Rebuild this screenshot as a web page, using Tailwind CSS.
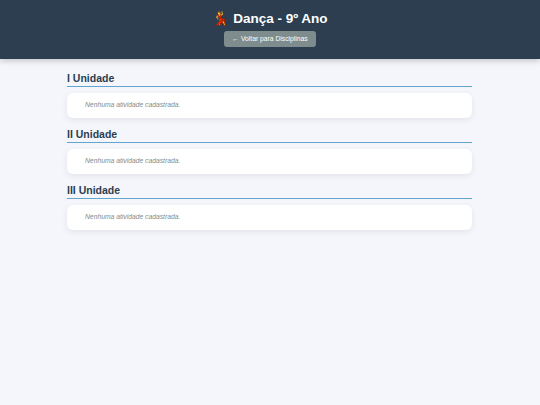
<!DOCTYPE html>
<html lang="pt-BR">
<head>
<meta charset="UTF-8" />
<title>Dança - 9º Ano</title>
<script src="https://cdn.jsdelivr.net/npm/@tailwindcss/browser@4"></script>
</head>
<body class="bg-[#f4f6fb] min-h-screen font-['Liberation_Sans',sans-serif]">
  <header class="h-[59px] bg-[#2c3e50] shadow-[0_2px_6px_rgba(0,0,0,0.2)] flex flex-col items-center pt-[9px]">
    <h1 class="text-[13.5px] leading-[19px] font-bold text-white">💃 Dança - 9º Ano</h1>
    <a class="mt-[3px] h-[16px] w-[92px] flex items-center justify-center rounded-[3px] bg-[#7f8c8d] text-white text-[6.75px]">← Voltar para Disciplinas</a>
  </header>
  <main class="w-[405px] ml-[67px] pt-[12px]">
    <section class="h-[56px]">
      <h2 class="h-[16px] text-[10.5px] leading-[14px] font-bold text-[#2c3e50] border-b border-[#62a6cf]">I Unidade</h2>
      <div class="mt-[6px] h-[25px] px-[18px] flex items-center bg-white rounded-[6px] shadow-[0_2px_6px_rgba(0,0,0,0.08)] text-[6.75px] italic text-[#7f8c8d]">Nenhuma atividade cadastrada.</div>
    </section>
    <section class="h-[56px]">
      <h2 class="h-[16px] text-[10.5px] leading-[14px] font-bold text-[#2c3e50] border-b border-[#62a6cf]">II Unidade</h2>
      <div class="mt-[6px] h-[25px] px-[18px] flex items-center bg-white rounded-[6px] shadow-[0_2px_6px_rgba(0,0,0,0.08)] text-[6.75px] italic text-[#7f8c8d]">Nenhuma atividade cadastrada.</div>
    </section>
    <section class="h-[56px]">
      <h2 class="h-[16px] text-[10.5px] leading-[14px] font-bold text-[#2c3e50] border-b border-[#62a6cf]">III Unidade</h2>
      <div class="mt-[6px] h-[25px] px-[18px] flex items-center bg-white rounded-[6px] shadow-[0_2px_6px_rgba(0,0,0,0.08)] text-[6.75px] italic text-[#7f8c8d]">Nenhuma atividade cadastrada.</div>
    </section>
  </main>
</body>
</html>
